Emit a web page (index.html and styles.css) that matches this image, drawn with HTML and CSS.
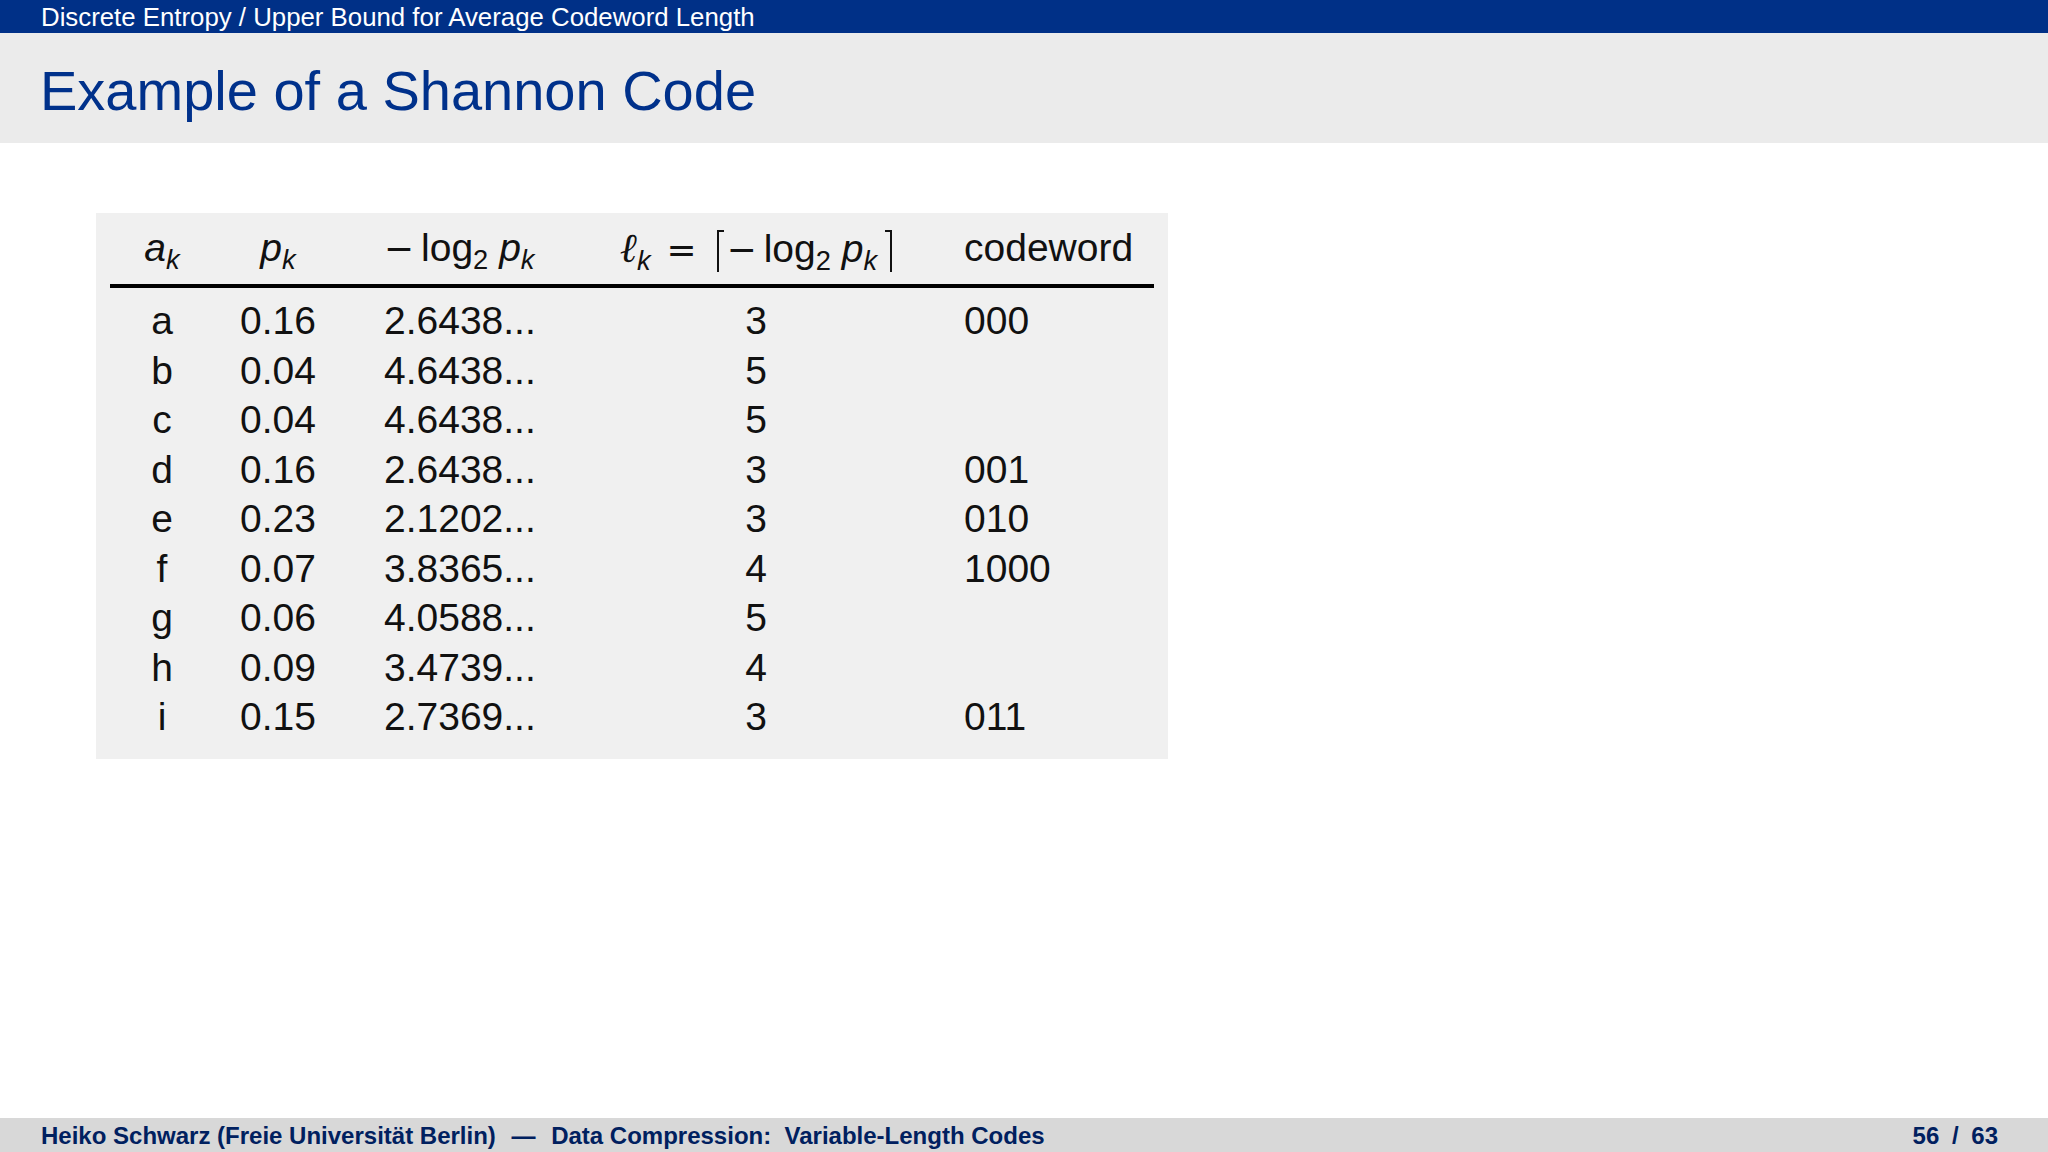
FILE: index.html
```html
<!DOCTYPE html>
<html>
<head>
<meta charset="utf-8">
<link rel="stylesheet" href="styles.css">
</head>
<body>
<div class="slide">
  <div class="topbar">Discrete Entropy / Upper Bound for Average Codeword Length</div>
  <div class="titlebar">Example of a Shannon Code</div>
  <div class="main">
    <div class="box">
      <div class="grid head">
        <div class="c"><span class="mi">a</span><sub class="mi">k</sub></div>
        <div class="c"><span class="mi">p</span><sub class="mi">k</sub></div>
        <div class="l"><span class="op minus">−</span>log<sub>2</sub>&nbsp;<span class="mi">p</span><sub class="mi">k</sub></div>
        <div class="c"><span class="ell">ℓ</span><sub class="mi">k</sub><span class="op eq">=</span><span class="ceil-l"></span><span class="op minus">−</span>log<sub>2</sub>&nbsp;<span class="mi">p</span><sub class="mi">k</sub><span class="ceil-r"></span></div>
        <div class="l cw">codeword</div>
      </div>
      <div class="grid body">
        <div class="c">a</div><div class="c">0.16</div><div class="l">2.6438...</div><div class="c">3</div><div class="l cw">000</div>
        <div class="c">b</div><div class="c">0.04</div><div class="l">4.6438...</div><div class="c">5</div><div class="l cw"></div>
        <div class="c">c</div><div class="c">0.04</div><div class="l">4.6438...</div><div class="c">5</div><div class="l cw"></div>
        <div class="c">d</div><div class="c">0.16</div><div class="l">2.6438...</div><div class="c">3</div><div class="l cw">001</div>
        <div class="c">e</div><div class="c">0.23</div><div class="l">2.1202...</div><div class="c">3</div><div class="l cw">010</div>
        <div class="c">f</div><div class="c">0.07</div><div class="l">3.8365...</div><div class="c">4</div><div class="l cw">1000</div>
        <div class="c">g</div><div class="c">0.06</div><div class="l">4.0588...</div><div class="c">5</div><div class="l cw"></div>
        <div class="c">h</div><div class="c">0.09</div><div class="l">3.4739...</div><div class="c">4</div><div class="l cw"></div>
        <div class="c">i</div><div class="c">0.15</div><div class="l">2.7369...</div><div class="c">3</div><div class="l cw">011</div>
      </div>
    </div>
  </div>
  <div class="footer">
    <span>Heiko Schwarz (Freie Universität Berlin) <span class="dash">—</span> Data Compression:&nbsp; Variable-Length Codes</span>
    <span>56 <span class="slash">/</span> 63</span>
  </div>
</div>
</body>
</html>
```
FILE: styles.css
```css
html, body {
  margin: 0;
  padding: 0;
  background: #ffffff;
}
.slide {
  width: 2048px;
  height: 1152px;
  display: flex;
  flex-direction: column;
  font-family: "Liberation Sans", Arial, sans-serif;
  overflow: hidden;
}
.topbar {
  height: 33px;
  background: #003087;
  color: #ffffff;
  font-size: 25.8px;
  line-height: 35px;
  padding-left: 41px;
  white-space: nowrap;
}
.titlebar {
  height: 110px;
  background: #ebebeb;
  color: #00318b;
  font-size: 56px;
  display: flex;
  align-items: center;
  padding-left: 40px;
  padding-top: 5px;
  box-sizing: border-box;
}
.main {
  flex: 1;
  padding: 70px 0 0 96px;
}
.box {
  width: 1072px;
  height: 546px;
  box-sizing: border-box;
  background: #f0f0f0;
  padding: 10px 14px 0 14px;
  font-size: 39px;
  color: #111111;
}
.grid {
  display: grid;
  grid-template-columns: 104px 128px 258px 312px 242px;
}
.head {
  grid-auto-rows: 50px;
  line-height: 50px;
  padding-bottom: 11px;
  border-bottom: 4px solid #000000;
  margin-bottom: 8px;
}
.body {
  grid-auto-rows: 49.5px;
  line-height: 49.5px;
}
.c {
  text-align: center;
  white-space: nowrap;
}
.l {
  text-align: left;
  padding-left: 42px;
  white-space: nowrap;
}
.l.cw {
  padding-left: 52px;
}
.mi {
  font-style: italic;
}
.op {
  font-family: "DejaVu Sans", sans-serif;
  font-size: 0.92em;
}
.minus {
  margin-right: 7px;
}
sub {
  font-size: 0.7em;
  line-height: 0;
  vertical-align: -0.3em;
}
.ell {
  font-family: "DejaVu Serif", serif;
  font-style: italic;
  font-size: 1.05em;
}
.eq {
  margin: 0 20px 0 16px;
}
.ceil-l, .ceil-r {
  display: inline-block;
  width: 7px;
  height: 42px;
  vertical-align: -10px;
  border-top: 2px solid #111;
  box-sizing: border-box;
}
.ceil-l {
  border-left: 2px solid #111;
  margin-right: 3px;
}
.ceil-r {
  border-right: 2px solid #111;
  margin-left: 8px;
}
.footer {
  height: 34px;
  background: #d8d8d8;
  color: #00205f;
  font-size: 24px;
  font-weight: bold;
  display: flex;
  align-items: center;
  justify-content: space-between;
  padding: 2px 50px 0 41px;
  box-sizing: border-box;
  white-space: nowrap;
}
.dash {
  margin: 0 9px;
}
.slash {
  margin: 0 6px;
}
```
